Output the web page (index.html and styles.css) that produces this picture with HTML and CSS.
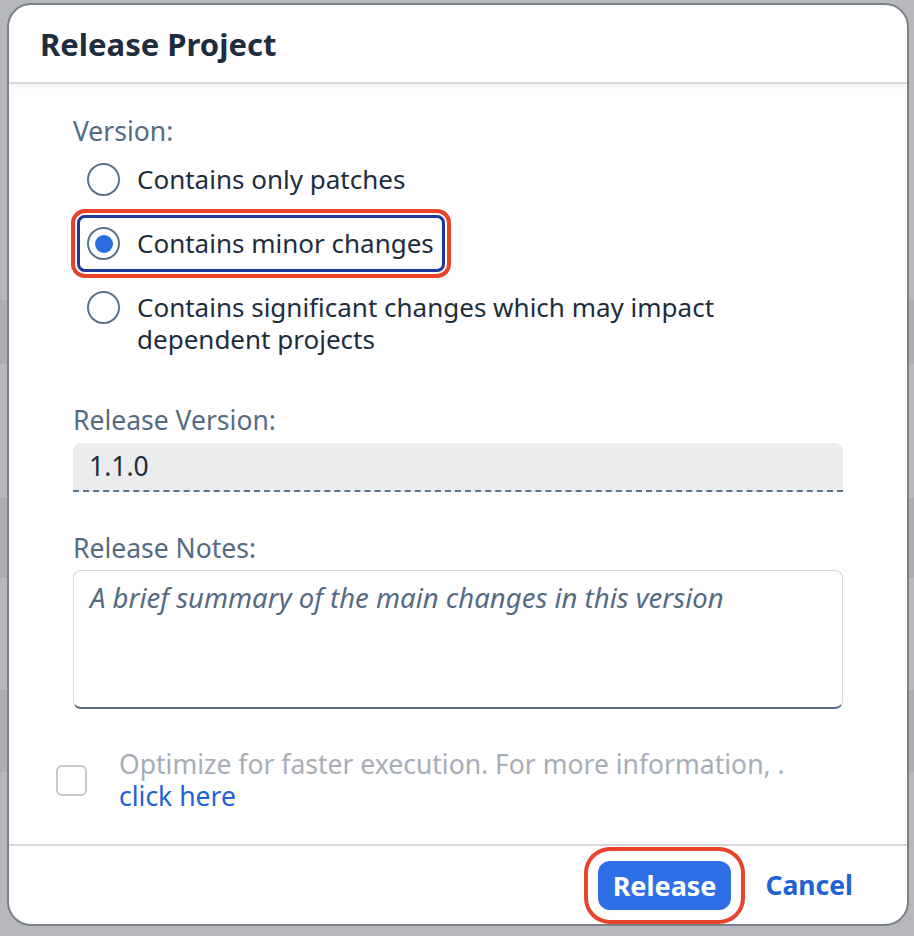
FILE: index.html
```html
<!DOCTYPE html>
<html lang="en">
<head>
<meta charset="utf-8">
<title>Release Project</title>
<link rel="stylesheet" href="styles.css">
</head>
<body>
<div class="dialog">
  <header class="dlg-header">
    <h1 class="dlg-title">Release Project</h1>
  </header>
  <section class="dlg-content">
    <div class="label label-version">Version:</div>
    <div class="radio-group">
      <div class="radio-row">
        <span class="radio"></span>
        <span class="radio-text">Contains only patches</span>
      </div>
      <div class="radio-row radio-focus">
        <span class="radio radio-checked"><span class="radio-dot"></span></span>
        <span class="radio-text">Contains minor changes</span>
      </div>
      <div class="radio-row">
        <span class="radio"></span>
        <span class="radio-text"><span class="line">Contains significant changes which may impact</span><span class="line">dependent projects</span></span>
      </div>
    </div>
    <div class="label label-gap">Release Version:</div>
    <div class="input">1.1.0</div>
    <div class="label label-gap2">Release Notes:</div>
    <div class="textarea"><span class="placeholder">A brief summary of the main changes in this version</span></div>
    <div class="check-row">
      <span class="checkbox"></span>
      <div class="check-text">
        <div class="check-disabled">Optimize for faster execution. For more information, .</div>
        <a class="link" href="#">click here</a>
      </div>
    </div>
  </section>
  <footer class="dlg-footer">
    <button class="btn-primary" type="button">Release</button>
    <button class="btn-link" type="button">Cancel</button>
  </footer>
</div>
</body>
</html>
```

FILE: styles.css
```css
html, body {
  margin: 0;
  padding: 0;
}
body {
  background: linear-gradient(to bottom,
    #b6b8bb 0, #b6b8bb 300px,
    #abadb1 300px, #abadb1 364px,
    #b8babd 364px, #b8babd 498px,
    #abadb1 498px, #abadb1 578px,
    #b8babd 578px, #b8babd 690px,
    #abadb1 690px, #abadb1 772px,
    #b6b8bb 772px, #b6b8bb 100%);
  font-family: "Noto Sans", "Liberation Sans", sans-serif;
  color: #1d2d3e;
  width: 914px;
  height: 936px;
  overflow: hidden;
}
.dialog {
  margin: 3px 0 0 7px;
  width: 898px;
  height: 919px;
  background: #fff;
  border: 2px solid #7b8189;
  border-radius: 24px;
  display: flex;
  flex-direction: column;
  overflow: hidden;
}
.dlg-header {
  height: 77px;
  border-bottom: 2px solid #d9d9d9;
  box-shadow: 0 3px 4px rgba(0,0,0,0.04);
  display: flex;
  align-items: center;
  padding-left: 31px;
  flex-shrink: 0;
}
.dlg-title {
  margin: 0;
  font-size: 31px;
  font-weight: 700;
  color: #1d2d3e;
}
.dlg-content {
  flex: 1;
  padding: 31px 64px 0 64px;
  display: flex;
  flex-direction: column;
  align-items: flex-start;
}
.label {
  font-size: 26.5px;
  line-height: 32px;
  color: #556b82;
}
.radio-group {
  display: flex;
  flex-direction: column;
  align-items: flex-start;
  gap: 13px;
  margin-left: 7px;
  margin-top: 7px;
}
.radio-row {
  display: flex;
  align-items: flex-start;
  padding: 9px 8px 9px 7px;
  border: 3px solid transparent;
  border-radius: 8px;
  margin: -3px;
  font-size: 26px;
  line-height: 32px;
  color: #1d2d3e;
}
.radio-text {
  display: flex;
  flex-direction: column;
}
.line {
  display: block;
  height: 32px;
}
.radio-focus {
  border-color: #1b3a9c;
  box-shadow: 0 0 0 2px #fff, 0 0 0 6px #e8432b;
}
.radio {
  width: 33px;
  height: 33px;
  box-sizing: border-box;
  border: 2px solid #5b738b;
  border-radius: 50%;
  flex-shrink: 0;
  margin-right: 17px;
  display: flex;
  align-items: center;
  justify-content: center;
}
.radio-dot {
  width: 18px;
  height: 18px;
  border-radius: 50%;
  background: #2b6bdd;
}
.label-gap {
  margin-top: 40px;
}
.input {
  align-self: stretch;
  margin-top: 7px;
  height: 47px;
  background: #eaecee;
  border-bottom: 2px dashed #5b738b;
  border-radius: 8px 8px 0 0;
  box-sizing: content-box;
  padding: 0 16px;
  font-size: 26.5px;
  line-height: 47px;
  color: #1d2d3e;
}
.label-gap2 {
  margin-top: 40px;
}
.textarea {
  align-self: stretch;
  margin-top: 6px;
  height: 139px;
  border: 1px solid #d5dadd;
  border-bottom: 2px solid #556b82;
  border-radius: 8px;
  padding: 11px 16px 0;
  box-sizing: border-box;
}
.placeholder {
  font-size: 27.5px;
  line-height: 32px;
  font-style: italic;
  color: #556b82;
}
.check-row {
  display: flex;
  align-items: center;
  margin-top: 39px;
  margin-left: -17px;
}
.checkbox {
  width: 31px;
  height: 31px;
  box-sizing: border-box;
  border: 2px solid #c3c9cf;
  border-radius: 6px;
  margin-right: 32px;
  flex-shrink: 0;
}
.check-text {
  font-size: 26.5px;
  line-height: 32px;
  display: flex;
  flex-direction: column;
  align-items: flex-start;
}
.check-disabled {
  color: #a6adb5;
  height: 32px;
}
.link {
  color: #1f62d6;
  text-decoration: none;
  height: 32px;
}
.dlg-footer {
  height: 78px;
  border-top: 2px solid #d9d9d9;
  display: flex;
  align-items: center;
  justify-content: flex-end;
  padding-right: 54px;
  gap: 34px;
  flex-shrink: 0;
  margin-top: auto;
}
.btn-primary {
  font-family: inherit;
  height: 49px;
  padding: 0 15px;
  border: none;
  border-radius: 12px;
  background: #2e6fe6;
  color: #fff;
  font-size: 27px;
  font-weight: 700;
  box-shadow: 0 0 0 10px #fff, 0 0 0 14px #e8432b;
}
.btn-link {
  font-family: inherit;
  border: none;
  background: none;
  padding: 0;
  color: #1f62d6;
  font-size: 26.5px;
  font-weight: 700;
}
```
